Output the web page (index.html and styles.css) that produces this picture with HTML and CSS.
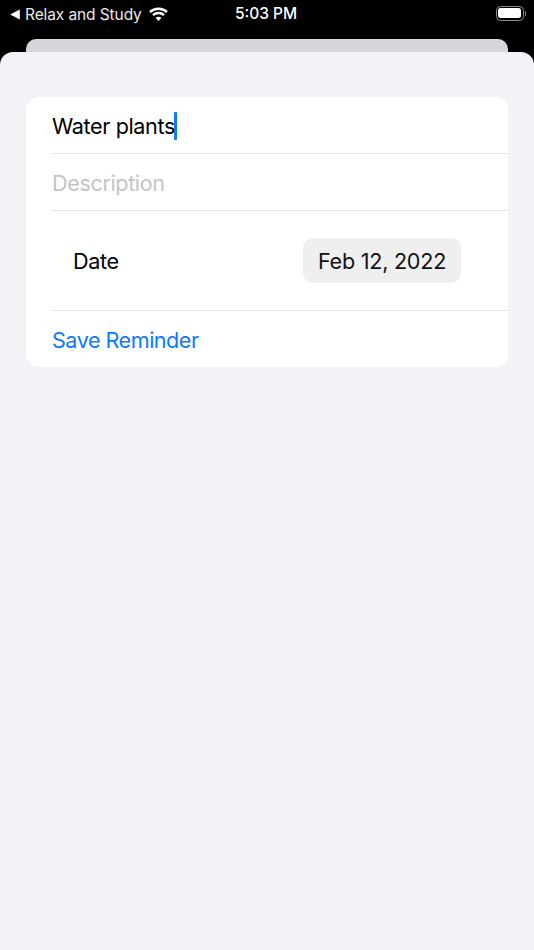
FILE: index.html
```html
<!DOCTYPE html>
<html lang="en">
<head>
<meta charset="utf-8">
<title>New Reminder</title>
<link rel="stylesheet" href="styles.css">
</head>
<body>
<div class="screen">
  <header class="status">
    <div class="status-left">
      <svg class="back-tri" width="10" height="11" viewBox="0 0 10 11"><path d="M9.8 0.6v9.8L0.2 5.5z" fill="#fff"/></svg>
      <span class="back-label">Relax and Study</span>
      <svg class="wifi" width="19" height="14" viewBox="0 0 19 14"><g fill="none" stroke="#fff" stroke-width="2.5"><path d="M1 5C5.7.5 13.3.5 18 5"/><path d="M4 8.2C7 5.4 12 5.4 15 8.2"/></g><path d="M6.6 10.9c1.6-1.5 4.2-1.5 5.8 0L9.5 14z" fill="#fff"/></svg>
    </div>
    <div class="status-time">5:03 PM</div>
    <div class="status-right">
      <div class="battery"><div class="battery-fill"></div></div>
      <div class="battery-tip"></div>
    </div>
  </header>
  <div class="back-card"></div>
  <main class="sheet">
    <section class="card">
      <div class="row row-input">
        <span class="value">Water plants</span><span class="caret"></span>
      </div>
      <div class="row row-input">
        <span class="placeholder">Description</span>
      </div>
      <div class="row row-date">
        <span class="date-label">Date</span>
        <span class="date-pill">Feb 12, 2022</span>
      </div>
      <div class="row row-save">
        <span class="save">Save Reminder</span>
      </div>
    </section>
  </main>
</div>
</body>
</html>
```
FILE: styles.css
```css
* { box-sizing: border-box; }
html, body { margin: 0; padding: 0; height: 100%; }
body { background: #000; font-family: Inter, "Liberation Sans", sans-serif; }
.screen { width: 534px; height: 950px; display: flex; flex-direction: column; background: #000; overflow: hidden; }
.status { height: 39px; flex: none; display: grid; grid-template-columns: 1fr auto 1fr; align-items: start; padding: 0 8px 0 10px; color: #fff; }
.status-left { display: flex; align-items: center; height: 28px; }
.back-tri { margin-right: 5px; }
.back-label { font-size: 15.5px; color: #e9e9e9; letter-spacing: -0.1px; }
.wifi { margin-left: 7px; margin-top: -1px; }
.status-time { font-size: 15.5px; font-weight: 500; line-height: 28px; margin-left: -4px; }
.status-right { display: flex; align-items: center; justify-content: flex-end; height: 26px; }
.battery { width: 28px; height: 15px; border: 1.3px solid #8a8a8a; border-radius: 4.5px; padding: 1.5px; }
.battery-fill { width: 100%; height: 100%; background: #fff; border-radius: 2.5px; }
.battery-tip { width: 1.5px; height: 5px; background: #8a8a8a; margin-left: 1px; border-radius: 0 1px 1px 0; }
.back-card { height: 13px; flex: none; margin: 0 26px; background: #d5d5da; border-radius: 10px 10px 0 0; }
.sheet { flex: 1; background: #f2f2f7; border-radius: 13px 13px 0 0; padding: 45px 26px 0; }
.card { background: #fff; border-radius: 13px; padding-left: 26px; }
.row { display: flex; align-items: center; border-bottom: 1px solid #e4e4e6; font-size: 21.6px; letter-spacing: -0.38px; }
.row-input { height: 57px; padding-top: 1px; }
.value { color: #000; }
.caret { width: 3px; height: 28px; background: #0a7aff; border-radius: 1px; margin-left: -1px; }
.placeholder { color: #c4c4c6; }
.row-date { height: 100px; padding: 0 47px 0 21px; justify-content: space-between; }
.date-label { color: #000; }
.date-pill { background: #efeff0; color: #111; height: 45px; width: 158px; border-radius: 10px; display: flex; align-items: center; justify-content: center; letter-spacing: -0.25px; }
.row-save { height: 56px; border-bottom: none; padding-top: 2px; }
.save { color: #0a7aff; letter-spacing: -0.5px; }
```
